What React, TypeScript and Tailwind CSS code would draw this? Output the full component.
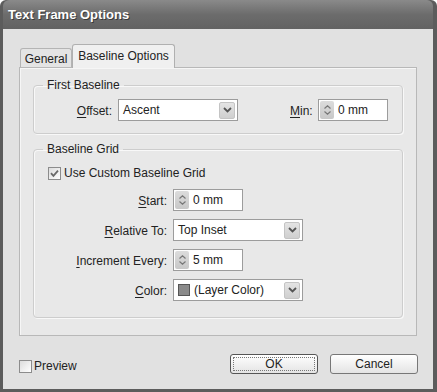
import { ReactNode } from 'react'

const font = { fontFamily: '"Liberation Sans", Arial, sans-serif' }

function Chevron() {
  return (
    <svg width="9" height="6" viewBox="0 0 9 6">
      <path d="M1 1l3.5 3.5L8 1" fill="none" stroke="#555" strokeWidth="1.8" />
    </svg>
  )
}

function Select({ width, children }: { width: string; children: ReactNode }) {
  return (
    <div className={`${width} flex h-[22px] items-center border border-[#9c9c9c] bg-white pl-[1px] pr-[2px]`}>
      <div className="flex flex-1 items-center gap-[4px] pl-[3px] text-[12px] text-[#222]">{children}</div>
      <div className="flex h-[17px] w-[16px] items-center justify-center rounded-[2px] border border-[#c4c4c4] bg-gradient-to-b from-[#e4e4e4] to-[#cfcfcf]">
        <Chevron />
      </div>
    </div>
  )
}

function Spinner({ value }: { value: string }) {
  return (
    <div className="flex h-[22px] w-[70px] items-center border border-[#9c9c9c] bg-white pl-[1px]">
      <div className="flex h-[18px] w-[14px] flex-col items-center justify-center gap-[2px] rounded-[2px] bg-gradient-to-b from-[#dcdcdc] to-[#c8c8c8]">
        <svg width="7" height="4" viewBox="0 0 7 4">
          <path d="M0.5 3.5L3.5 0.8 6.5 3.5" fill="none" stroke="#777" strokeWidth="1.2" />
        </svg>
        <svg width="7" height="4" viewBox="0 0 7 4">
          <path d="M0.5 0.5L3.5 3.2 6.5 0.5" fill="none" stroke="#777" strokeWidth="1.2" />
        </svg>
      </div>
      <span className="pl-[4px] text-[12px] text-[#222]">{value}</span>
    </div>
  )
}

function Checkbox({ checked }: { checked?: boolean }) {
  return (
    <div className="flex h-[13px] w-[13px] items-center justify-center border border-[#8c8c8c] bg-gradient-to-br from-[#dcdcdc] to-white">
      {checked && (
        <svg width="9" height="9" viewBox="0 0 9 9">
          <path d="M1 4.2l2.4 2.6L8 1.6" fill="none" stroke="#6a6a6a" strokeWidth="1.8" />
        </svg>
      )}
    </div>
  )
}

function Label({ u, rest }: { u: string; rest: string }) {
  return (
    <span className="text-[12px] text-[#222]">
      <span className="underline underline-offset-2">{u}</span>
      {rest}
    </span>
  )
}

function Group({ title, children, className }: { title: string; children: ReactNode; className?: string }) {
  return (
    <fieldset
      className={`rounded-[4px] border border-[#cdcdcd] shadow-[inset_1px_1px_0_#f8f8f8,1px_1px_0_#f8f8f8] ${className ?? ''}`}
    >
      <legend className="ml-[9px] px-[4px] text-[12px] leading-[14px] text-[#222]">{title}</legend>
      {children}
    </fieldset>
  )
}

export default function App() {
  return (
    <div
      style={font}
      className="flex h-[392px] w-[437px] flex-col rounded-t-[6px] bg-[#5c5c5c] pb-[3px] pl-[3px] pr-[4px] leading-[15px]"
    >
      <div className="flex h-[29px] shrink-0 items-center rounded-t-[6px] bg-gradient-to-b from-[#8a8a8a] via-[#6c6c6c] to-[#626262] pb-[1px] pl-[5px] text-[13px] font-bold text-white [text-shadow:1px_1px_0_#3a3a3a]">
        Text Frame Options
      </div>

      <div className="flex flex-1 flex-col bg-[#e1e1e1] pl-[16px] pr-[16px] pt-[15px]">
        <div className="flex items-end pl-[1px]">
          <div className="mb-[-1px] flex h-[20px] w-[52px] items-center justify-center rounded-t-[3px] border border-b-0 border-[#b4b4b4] bg-[#e4e4e4] pt-[1px] text-[12px] text-[#222]">
            General
          </div>
          <div className="relative z-10 mb-[-1px] flex h-[24px] w-[103px] items-center justify-center rounded-t-[3px] border border-b-0 border-[#b0b0b0] bg-[#f0f0f0] text-[12px] text-[#222]">
            Baseline Options
          </div>
        </div>

        <div className="flex flex-col border border-[#b8b8b8] bg-[#e8e8e8] px-[13px] pb-[17px] pt-[10px] shadow-[inset_1px_1px_0_#f6f6f6]">
          <Group title="First Baseline">
            <div className="flex items-center pb-[12px] pt-[7px]">
              <div className="w-[78px] text-right">
                <Label u="O" rest="ffset:" />
              </div>
              <div className="ml-[6px]">
                <Select width="w-[120px]">Ascent</Select>
              </div>
              <div className="ml-[52px] w-[24px]">
                <Label u="M" rest="in:" />
              </div>
              <div className="ml-[4px]">
                <Spinner value="0 mm" />
              </div>
            </div>
          </Group>

          <Group title="Baseline Grid" className="mt-[8px]">
            <div className="flex flex-col pb-[16px] pl-[14px] pt-[10px]">
              <div className="flex h-[15px] items-center gap-[3px]">
                <Checkbox checked />
                <span className="text-[12px] text-[#222]">Use Custom Baseline Grid</span>
              </div>
              <div className="mt-[8px] grid grid-cols-[119px_auto] items-center gap-x-[6px] gap-y-[8px]">
                <div className="text-right">
                  <Label u="S" rest="tart:" />
                </div>
                <Spinner value="0 mm" />
                <div className="text-right">
                  <Label u="R" rest="elative To:" />
                </div>
                <Select width="w-[130px]">Top Inset</Select>
                <div className="text-right">
                  <Label u="I" rest="ncrement Every:" />
                </div>
                <Spinner value="5 mm" />
                <div className="text-right">
                  <Label u="C" rest="olor:" />
                </div>
                <Select width="w-[130px]">
                  <span className="h-[12px] w-[12px] border border-[#555] bg-[#8a8a8a]" />
                  (Layer Color)
                </Select>
              </div>
            </div>
          </Group>
        </div>

        <div className="mt-[18px] flex items-center">
          <div className="flex items-center gap-[2px] pt-[4px]">
            <Checkbox />
            <span className="text-[12px] text-[#222]">Preview</span>
          </div>
          <button className="ml-auto flex h-[20px] w-[88px] items-center justify-center rounded-[3px] border border-[#555] bg-gradient-to-b from-white to-[#e4e4e4] p-[2px] text-[12px] text-[#222]">
            <span className="flex h-full w-full items-center justify-center border border-dotted border-[#777]">OK</span>
          </button>
          <button className="ml-[12px] mr-[-1px] flex h-[20px] w-[88px] items-center justify-center rounded-[3px] border border-[#777] bg-gradient-to-b from-white to-[#e4e4e4] text-[12px] text-[#222]">
            Cancel
          </button>
        </div>
      </div>
    </div>
  )
}
